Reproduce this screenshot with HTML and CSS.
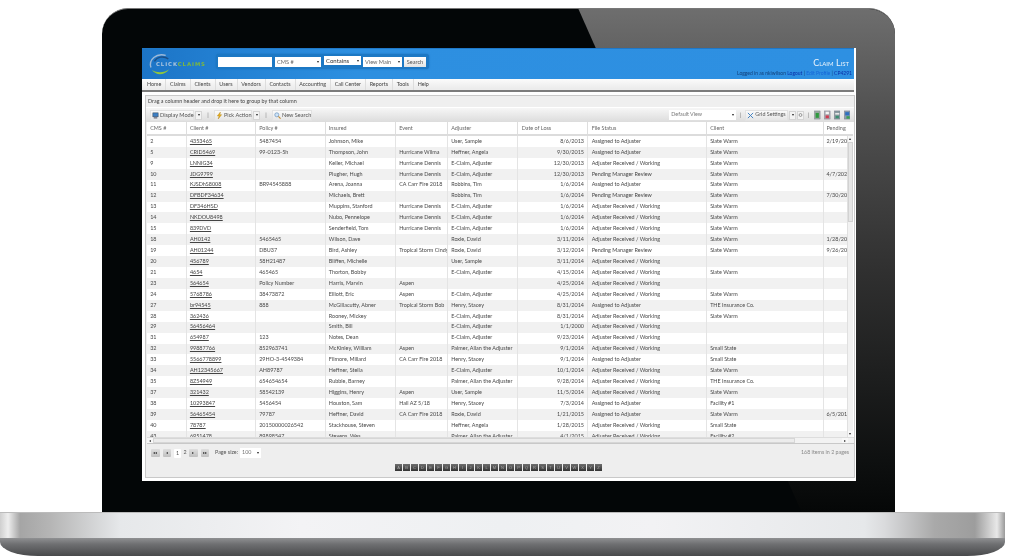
FILE: index.html
```html
<!DOCTYPE html>
<html lang="en">
<head>
<meta charset="utf-8">
<title>Claim List</title>
<link rel="stylesheet" href="styles.css">
</head>
<body>
<div class="laptop">
  <div class="lid">
    <div class="screen">
      <header class="top">
        <div class="logo">
          <svg class="swirl" viewBox="0 0 30 30" width="27" height="26"><path d="M4 19C1 10 10 2 21 5" fill="none" stroke="#9db9d8" stroke-width="1.6"/><path d="M8 12C11 7 18 5 24 9" fill="none" stroke="#1c4f86" stroke-width="1.6"/><path d="M5 22C10 29 20 28 25 21C20 25 12 26 5 22Z" fill="#8fc63f"/></svg>
          <span class="logo-text"><span class="lt-a">CLICK</span><span class="lt-b">CLAIMS</span></span>
        </div>
        <div class="searchbar">
          <div class="s-input"></div>
          <div class="s-sel s-cms">CMS #<i class="arr"></i></div>
          <div class="s-sel s-con">Contains<i class="arr"></i></div>
          <div class="s-sel s-view">View Main<i class="arr"></i></div>
          <div class="s-btn">Search</div>
        </div>
        <div class="title-box">
          <div class="title">Claim List</div>
          <div class="login">Logged in as nkiwilson <a class="l-dark">Logout</a> | <a class="l-blue">Edit Profile</a> | <a class="l-dark">CP4291</a></div>
        </div>
      </header>
      <nav class="nav">
        <a>Home</a><a>Claims</a><a>Clients</a><a>Users</a><a>Vendors</a><a>Contacts</a><a>Accounting</a><a>Call Center</a><a>Reports</a><a>Tools</a><a>Help</a>
      </nav>
      <main class="main">
        <div class="panel">
          <div class="group">Drag a column header and drop it here to group by that column</div>
          <div class="toolbar">
            <div class="tb-btn tb-display"><svg class="ic" viewBox="0 0 8 8"><rect x="1" y="1" width="6" height="4.5" fill="#3d7fc4" stroke="#345"  stroke-width=".6"/><rect x="2" y="6" width="4" height="1.4" fill="#667"/></svg>Display Mode</div>
            <div class="tb-drop"><i class="arr"></i></div>
            <span class="tb-sep">|</span>
            <div class="tb-btn tb-pick"><svg class="ic" viewBox="0 0 8 8"><path d="M5 0L1.500 4.500H3.500L2.500 8L6.500 3H4.500Z" fill="#e8b020" stroke="#a87808" stroke-width=".4"/></svg>Pick Action</div>
            <div class="tb-drop"><i class="arr"></i></div>
            <span class="tb-sep">|</span>
            <div class="tb-btn tb-new"><svg class="ic" viewBox="0 0 8 8"><circle cx="3.200" cy="3.200" r="2.300" fill="#cfe4f7" stroke="#5a87b5" stroke-width=".7"/><path d="M5 5L7.500 7.500" stroke="#c08a30" stroke-width="1.200"/></svg>New Search</div>
            <div class="tb-right">
              <div class="view-sel">Default View<i class="arr"></i></div>
              <span class="tb-sep tb-sep1">|</span>
              <div class="tb-btn tb-grid"><svg class="ic" viewBox="0 0 8 8"><path d="M1 1L7 7M7 1L1 7" stroke="#3f7fc0" stroke-width="1.100"/></svg>Grid Settings</div>
              <div class="tb-drop"><i class="arr"></i></div>
              <div class="tb-drop"><svg class="ic-refresh" viewBox="0 0 8 8"><circle cx="4" cy="4" r="2.300" fill="none" stroke="#555" stroke-width=".9"/></svg></div>
              <span class="tb-sep tb-sep2">|</span>
              <svg class="ic-doc" viewBox="0 0 8 11"><rect x=".5" y=".5" width="7" height="10" fill="#9aa8a0" stroke="#778"  stroke-width=".5"/><rect x="2" y="3" width="4" height="6" fill="#2f9a3f"/></svg>
              <svg class="ic-doc" viewBox="0 0 8 11"><rect x=".5" y=".5" width="7" height="10" fill="#a9a9b0" stroke="#778" stroke-width=".5"/><rect x="2" y="1.500" width="4" height="3" fill="#f4f4f4"/><rect x="2" y="6" width="4" height="3.500" fill="#d23b50"/></svg>
              <svg class="ic-doc" viewBox="0 0 8 11"><rect x=".5" y=".5" width="7" height="10" fill="#8a9aa0" stroke="#667" stroke-width=".5"/><rect x="1.500" y="3" width="5" height="2" fill="#e8e8e8"/><rect x="2" y="6.500" width="4" height="3" fill="#3a8f70"/></svg>
              <svg class="ic-doc" viewBox="0 0 8 11"><rect x=".5" y=".5" width="7" height="10" fill="#8a9cb0" stroke="#667" stroke-width=".5"/><rect x="1.500" y="2" width="5" height="4" fill="#2f6fc0"/><rect x="3" y="7" width="4" height="3" fill="#3aa050"/></svg>
            </div>
          </div>
          <div class="gridwrap">
            <div class="row head"><div>CMS #</div><div>Client #</div><div>Policy #</div><div>Insured</div><div>Event</div><div>Adjuster</div><div>Date of Loss</div><div>File Status</div><div>Client</div><div>Pending</div></div>
            <div class="body">
              <div class="rows">
                <div class="row"><div>2</div><div><a>4353465</a></div><div>5487454</div><div>Johnson, Mike</div><div></div><div>User, Sample</div><div class="num">8/6/2013</div><div>Assigned to Adjuster</div><div>Slate Warm</div><div>2/19/2013</div></div>
                <div class="row"><div>5</div><div><a>CRID5469</a></div><div>99-0123-5h</div><div>Thompson, John</div><div>Hurricane Wilma</div><div>Heffner, Angela</div><div class="num">9/30/2015</div><div>Assigned to Adjuster</div><div>Slate Warm</div><div></div></div>
                <div class="row"><div>9</div><div><a>LNNIG34</a></div><div></div><div>Keller, Michael</div><div>Hurricane Dennis</div><div>E-Claim, Adjuster</div><div class="num">12/30/2013</div><div>Adjuster Received / Working</div><div>Slate Warm</div><div></div></div>
                <div class="row"><div>10</div><div><a>JDG9799</a></div><div></div><div>Plugher, Hugh</div><div>Hurricane Dennis</div><div>E-Claim, Adjuster</div><div class="num">12/30/2013</div><div>Pending Manager Review</div><div>Slate Warm</div><div>4/7/2020</div></div>
                <div class="row"><div>11</div><div><a>KJSDhS8008</a></div><div>BR94545888</div><div>Arena, Joanna</div><div>CA Carr Fire 2018</div><div>Robbins, Tim</div><div class="num">1/6/2014</div><div>Assigned to Adjuster</div><div>Slate Warm</div><div></div></div>
                <div class="row"><div>12</div><div><a>DFBDF34634</a></div><div></div><div>Michaels, Brett</div><div></div><div>Robbins, Tim</div><div class="num">1/6/2014</div><div>Pending Manager Review</div><div>Slate Warm</div><div>7/30/2015</div></div>
                <div class="row"><div>13</div><div><a>DF346HSD</a></div><div></div><div>Muppins, Stanford</div><div>Hurricane Dennis</div><div>E-Claim, Adjuster</div><div class="num">1/6/2014</div><div>Adjuster Received / Working</div><div>Slate Warm</div><div></div></div>
                <div class="row"><div>14</div><div><a>NKDOU8498</a></div><div></div><div>Nubo, Pennelope</div><div>Hurricane Dennis</div><div>E-Claim, Adjuster</div><div class="num">1/6/2014</div><div>Adjuster Received / Working</div><div>Slate Warm</div><div></div></div>
                <div class="row"><div>15</div><div><a>839DVD</a></div><div></div><div>Senderfield, Tom</div><div>Hurricane Dennis</div><div>E-Claim, Adjuster</div><div class="num">1/6/2014</div><div>Adjuster Received / Working</div><div>Slate Warm</div><div></div></div>
                <div class="row"><div>18</div><div><a>AH0142</a></div><div>5465465</div><div>Wilson, Dave</div><div></div><div>Roxie, David</div><div class="num">3/11/2014</div><div>Adjuster Received / Working</div><div>Slate Warm</div><div>1/28/2015</div></div>
                <div class="row"><div>19</div><div><a>AH01244</a></div><div>DBU37</div><div>Bird, Ashley</div><div>Tropical Storm Cindy</div><div>Roxie, David</div><div class="num">3/12/2014</div><div>Pending Manager Review</div><div>Slate Warm</div><div>9/26/2015</div></div>
                <div class="row"><div>20</div><div><a>456789</a></div><div>58H21487</div><div>Bliffen, Michelle</div><div></div><div>User, Sample</div><div class="num">3/11/2014</div><div>Adjuster Received / Working</div><div></div><div></div></div>
                <div class="row"><div>21</div><div><a>4654</a></div><div>465465</div><div>Thorton, Bobby</div><div></div><div>E-Claim, Adjuster</div><div class="num">4/15/2014</div><div>Adjuster Received / Working</div><div>Slate Warm</div><div></div></div>
                <div class="row"><div>23</div><div><a>564654</a></div><div>Policy Number</div><div>Harris, Marvin</div><div>Aspen</div><div></div><div class="num">4/25/2014</div><div>Adjuster Received / Working</div><div></div><div></div></div>
                <div class="row"><div>24</div><div><a>5768786</a></div><div>38473872</div><div>Elliott, Eric</div><div>Aspen</div><div>E-Claim, Adjuster</div><div class="num">4/25/2014</div><div>Adjuster Received / Working</div><div>Slate Warm</div><div></div></div>
                <div class="row"><div>27</div><div><a>br94545</a></div><div>888</div><div>McGillacutty, Abner</div><div>Tropical Storm Bob</div><div>Henry, Stacey</div><div class="num">8/31/2014</div><div>Assigned to Adjuster</div><div>THE Insurance Co.</div><div></div></div>
                <div class="row"><div>28</div><div><a>362436</a></div><div></div><div>Rooney, Mickey</div><div></div><div>E-Claim, Adjuster</div><div class="num">8/31/2014</div><div>Adjuster Received / Working</div><div>Slate Warm</div><div></div></div>
                <div class="row"><div>29</div><div><a>56456464</a></div><div></div><div>Smith, Bill</div><div></div><div>E-Claim, Adjuster</div><div class="num">1/1/2000</div><div>Adjuster Received / Working</div><div></div><div></div></div>
                <div class="row"><div>31</div><div><a>654987</a></div><div>123</div><div>Notes, Dean</div><div></div><div>E-Claim, Adjuster</div><div class="num">9/23/2014</div><div>Adjuster Received / Working</div><div></div><div></div></div>
                <div class="row"><div>32</div><div><a>99887766</a></div><div>852963741</div><div>McKinley, William</div><div>Aspen</div><div>Palmer, Allan the Adjuster</div><div class="num">9/1/2014</div><div>Adjuster Received / Working</div><div>Small State</div><div></div></div>
                <div class="row"><div>33</div><div><a>5566778899</a></div><div>29HO-3-4549384</div><div>Filmore, Millard</div><div>CA Carr Fire 2018</div><div>Henry, Stacey</div><div class="num">9/1/2014</div><div>Assigned to Adjuster</div><div>Small State</div><div></div></div>
                <div class="row"><div>34</div><div><a>AH12345667</a></div><div>AH89787</div><div>Heffner, Stella</div><div></div><div>E-Claim, Adjuster</div><div class="num">10/1/2014</div><div>Adjuster Received / Working</div><div>Slate Warm</div><div></div></div>
                <div class="row"><div>35</div><div><a>8Z54949</a></div><div>654654654</div><div>Rubble, Barney</div><div></div><div>Palmer, Allan the Adjuster</div><div class="num">9/28/2014</div><div>Adjuster Received / Working</div><div>THE Insurance Co.</div><div></div></div>
                <div class="row"><div>37</div><div><a>321432</a></div><div>58542139</div><div>Higgins, Henry</div><div>Aspen</div><div>User, Sample</div><div class="num">11/5/2014</div><div>Adjuster Received / Working</div><div>Slate Warm</div><div></div></div>
                <div class="row"><div>38</div><div><a>10293847</a></div><div>5456454</div><div>Houston, Sam</div><div>Hail AZ 5/18</div><div>Henry, Stacey</div><div class="num">7/3/2014</div><div>Assigned to Adjuster</div><div>Facility #1</div><div></div></div>
                <div class="row"><div>39</div><div><a>56465454</a></div><div>79787</div><div>Heffner, David</div><div>CA Carr Fire 2018</div><div>Roxie, David</div><div class="num">1/21/2015</div><div>Assigned to Adjuster</div><div>Slate Warm</div><div>6/5/2015</div></div>
                <div class="row"><div>40</div><div><a>78787</a></div><div>20150000026542</div><div>Stackhouse, Steven</div><div></div><div>Heffner, Angela</div><div class="num">1/28/2015</div><div>Adjuster Received / Working</div><div>Small State</div><div></div></div>
                <div class="row"><div>43</div><div><a>6951478</a></div><div>89898547</div><div>Stevens, Wes</div><div></div><div>Palmer, Allan the Adjuster</div><div class="num">4/1/2015</div><div>Adjuster Received / Working</div><div>Facility #2</div><div></div></div>
              </div>
              <div class="vscroll">
                <div class="vbtn"><i class="up"></i></div>
                <div class="vthumb"></div>
                <div class="vbtn vbtn-end"><i class="arr"></i></div>
              </div>
            </div>
            <div class="hscroll">
              <div class="hbtn"><i class="lt"></i></div>
              <div class="hthumb"></div>
              <div class="hbtn hbtn-end"><i class="rt"></i></div>
            </div>
          </div>
          <div class="pager">
            <div class="pg-btn"><i class="lt"></i><i class="lt"></i></div>
            <div class="pg-btn"><i class="lt"></i></div>
            <span class="pg-cur">1</span><span class="pg-num">2</span>
            <div class="pg-btn"><i class="rt"></i></div>
            <div class="pg-btn"><i class="rt"></i><i class="rt"></i></div>
            <span class="pg-label">Page size:</span>
            <div class="pg-sel">100<i class="arr"></i></div>
            <span class="pg-info">168 items in 2 pages</span>
          </div>
          <div class="alpha">
            <b>A</b><b>B</b><b>C</b><b>D</b><b>E</b><b>F</b><b>G</b><b>H</b><b>I</b><b>J</b><b>K</b><b>L</b><b>M</b><b>N</b><b>O</b><b>P</b><b>Q</b><b>R</b><b>S</b><b>T</b><b>U</b><b>V</b><b>W</b><b>X</b><b>Y</b><b>Z</b>
          </div>
        </div>
      </main>
    </div>
  </div>
  <div class="base"><div class="base-top"></div><div class="base-bottom"></div></div>
</div>
</body>
</html>
```

FILE: styles.css
```css
* { box-sizing: border-box; }
html, body { margin: 0; padding: 0; background: #fff; overflow: hidden; }
body { width: 1019px; height: 560px; font-family: Lato, "Open Sans", "Liberation Sans", sans-serif; }

.laptop { padding-top: 8px; width: 1019px; }
.lid {
  position: relative; width: 793px; height: 504px; margin-left: 102px;
  padding: 40px 39px 31px 40px;
  background: #030607; border-radius: 26px 26px 0 0;
  border-top: 1px solid #777; overflow: hidden;
}
.lid::before {
  content: ""; position: absolute; inset: 0;
  background: linear-gradient(180deg, #6e6e6e 0, #4f4f4f 22%, #303030 52%, #0c0e0e 92%, #050707 100%);
  clip-path: polygon(476px -1px, 793px -1px, 793px 504px, 700px 504px);
}
.screen {
  position: relative; width: 714px; height: 433px; margin-top: -1px;
  background: #fff; display: flex; flex-direction: column;
  filter: blur(.42px); color: #444; font-size: 5.4px; line-height: 1;
}
.arr { display: inline-block; width: 0; height: 0; border: 1.8px solid transparent; border-top: 2.4px solid #222; border-bottom: 0; }
.up { display: block; width: 0; height: 0; border: 1.8px solid transparent; border-bottom: 2.4px solid #222; border-top: 0; }
.lt { display: block; width: 0; height: 0; border: 1.8px solid transparent; border-right: 2.4px solid #333; border-left: 0; }
.rt { display: block; width: 0; height: 0; border: 1.8px solid transparent; border-left: 2.4px solid #333; border-right: 0; }

/* header */
.top {
  height: 31px; flex: none; display: flex; align-items: flex-start; margin-right: 2px;
  border-top: 1px solid #1f78c8;
  background: linear-gradient(90deg, #1c74c6 0, #2482d4 13%, #2d8fe0 30%, #2e90e2 100%);
}
.logo { position: relative; width: 74px; height: 30px; flex: none; display: flex; align-items: center; padding-left: 5px; }
.swirl { flex: none; }
.logo-text { position: absolute; left: 14px; top: 12.500px; font: 700 5.300px/1 "DejaVu Sans", sans-serif; letter-spacing: .95px; }
.lt-a { color: #a9c4df; }
.lt-b { color: #7fb83c; }
.searchbar {
  display: flex; align-items: center; gap: 2px; height: 15px; margin-top: 5px; padding: 0 3px 0 2px;
  background: #1c78c4; border-radius: 3px; box-shadow: 0 0 2px #1a6fb8; color: #666;
}
.s-input { width: 54px; height: 10px; background: #fff; margin-right: 1px; }
.s-sel { height: 10px; background: #fff; display: flex; align-items: center; justify-content: space-between; padding: 0 2px; font-size: 5.600px; }
.s-cms { width: 46px; margin-right: 1px; }
.s-con { width: 37px; height: 9px; margin-top: -2px; color: #333; font-size: 6px; }
.s-view { width: 39px; }
.s-btn { height: 10px; width: 22px; background: linear-gradient(#fff, #e4e4e4); display: flex; align-items: center; justify-content: center; font-size: 5.600px; color: #555; }
.title-box { margin-left: auto; margin-right: 2px; text-align: right; padding-top: 9px; }
.title { font-size: 9px; color: #eaf3fb; font-variant: small-caps; padding-right: 3px; }
.login { font-size: 5px; color: #12407a; margin-top: 3.500px; white-space: nowrap; }
.l-dark { color: #0a2fa8; }
.l-blue { color: #1565d8; }

/* nav */
.nav { height: 13px; flex: none; display: flex; padding-left: 1px; background: linear-gradient(#fbfbfb, #ececec 85%); border-bottom: 2px solid #7c7c7c; margin-right: 2px; }
.nav a { padding: 3px 4px 0 3.700px; border-right: 1px solid #ddd; height: 11px; color: #444; font-size: 5.400px; white-space: nowrap; }
.nav a:first-child { padding-left: 4px; }
.nav a:last-child { border-right: 0; }

/* main panel */
.main { flex: 1; min-height: 0; background: #fff; padding: 3px 1px 3px 3px; }
.panel { height: 100%; background: #eee; border: 1px solid #c9c9c9; display: flex; flex-direction: column; }
.group { height: 12px; flex: none; padding: 3px 0 0 2px; background: #efefef; border-bottom: 1px solid #fff; color: #444; font-size: 5.400px; white-space: nowrap; }
.toolbar { height: 14px; flex: none; display: flex; align-items: center; padding: 0 4px; gap: 1px; background: linear-gradient(#f6f6f6, #dcdcdc); }
.tb-btn { height: 11px; display: flex; align-items: center; gap: 1px; padding: 0 1px; background: linear-gradient(#fafafa, #e6e6e6); border: 1px solid #e2e2e2; color: #555; font-size: 5.600px; white-space: nowrap; }
.tb-drop { width: 7px; height: 9px; display: flex; align-items: center; justify-content: center; background: #f3f3f3; border: 1px solid #d5d5d5; flex: none; }
.tb-sep { width: 10px; text-align: center; color: #777; font-size: 6px; flex: none; }
.ic { width: 7px; height: 9px; flex: none; }
.ic-refresh { width: 6px; height: 6px; }
.tb-display { width: 44px; }
.tb-pick { width: 38px; }
.tb-new { width: 40px; }
.tb-right { margin-left: auto; display: flex; align-items: center; gap: 1px; }
.view-sel { width: 67px; height: 10px; background: #fff; display: flex; align-items: center; justify-content: space-between; padding: 0 2px; color: #777; font-size: 5.400px; }
.tb-sep1 { width: 7px; }
.tb-grid { width: 43px; font-size: 5.400px; }
.tb-sep2 { width: 6px; }
.ic-doc { width: 6.500px; height: 10px; margin-left: 2.200px; flex: none; }

/* grid */
.gridwrap { flex: none; margin-left: 1px; background: #fff; }
.row {
  display: grid; grid-template-columns: 39.7px 69.3px 69.7px 70.3px 52px 70.5px 70px 118.5px 117px 23px;
  height: 10.930px; align-items: stretch; white-space: nowrap;
}
.row > div { padding: 2.800px 0 0 3.200px; border-right: 1px solid #e4e4e4; overflow: hidden; color: #484848; font-size: 5.450px; }
.row > div:last-child { border-right: 0; padding-left: 2.500px; }
.row > .num { text-align: right; padding-right: 3.500px; padding-left: 0; }
.rows .row:nth-child(even) { background: #f1f1f1; }
.row a { color: #444; text-decoration: underline; }
.head { height: 14px; width: 706px; background: #fff; border-bottom: 2px solid #dcdcdc; }
.head > div { padding-top: 3.500px; color: #666; border-right-color: #dedede; }
.body { display: flex; height: 301px; overflow: hidden; }
.rows { width: 699.500px; flex: none; }
.vscroll { width: 6.500px; flex: none; background: #f2f2f2; border-left: 1px solid #e0e0e0; display: flex; flex-direction: column; }
.vbtn { height: 6px; display: flex; align-items: center; justify-content: center; background: #f8f8f8; flex: none; }
.vthumb { height: 80px; background: #e6e6e6; border: 1px solid #d2d2d2; flex: none; }
.vbtn-end { margin-top: auto; }
.hscroll { height: 7px; display: flex; align-items: center; background: #f2f2f2; border-top: 1px solid #ddd; border-bottom: 1px solid #c8c8c8; }
.hbtn { width: 6px; height: 5px; display: flex; align-items: center; justify-content: center; background: #f8f8f8; flex: none; }
.hthumb { width: 642px; height: 5px; background: #ececec; border: 1px solid #d6d6d6; flex: none; }
.hbtn-end { margin-left: 47px; }

/* pager */
.pager { height: 18px; flex: none; display: flex; align-items: center; padding: 0 5px 0 5px; color: #555; font-size: 5.400px; }
.pg-btn { width: 8.500px; height: 8px; margin-right: 3px; background: linear-gradient(#dedede, #c0c0c0); border-radius: 1px; display: flex; align-items: center; justify-content: center; flex: none; }
.pg-cur { width: 7px; height: 9px; background: #fff; border-radius: 1px; text-align: center; padding-top: 2px; margin-right: 1px; }
.pg-num { width: 6px; text-align: center; margin-right: 1px; }
.pg-label { margin-left: 3px; color: #555; white-space: nowrap; }
.pg-sel { width: 21px; height: 10px; margin-left: 2px; background: #fff; display: flex; align-items: center; justify-content: space-between; padding: 0 2px; color: #777; }
.pg-info { margin-left: auto; color: #888; font-size: 5.300px; white-space: nowrap; }
.alpha { display: flex; justify-content: center; gap: 1px; padding-top: 2px; margin-left: -3px; }
.alpha b { width: 7px; height: 7px; background: linear-gradient(#6e6e6e, #333); color: #aaa; font: 400 4px/7px "Liberation Sans", sans-serif; text-align: center; }

/* base */
.base { width: 1005px; height: 44px; display: flex; flex-direction: column; }
.base-top {
  height: 26px; flex: none; border-top: 1px solid #bbb;
  background: linear-gradient(90deg, #cfcfcf 0, #eeeeee .8%, #a5a5a5 2%, #b5b5b5 5%, #e6e8ea 12%, #f3f3f5 30%, #eef0f2 50%, #f2f2f4 65%, #e6e8ea 86%, #dadbdd 88%, #a9a9a9 93%, #9d9d9d 97%, #e8e8e8 99.200%, #9a9a9a 100%);
}
.base-bottom {
  height: 18px; flex: none; border-radius: 0 0 38px 38px / 0 0 14px 14px;
  background: linear-gradient(180deg, #8f9092 0, #6e6f71 35%, #48494b 100%);
}
```
